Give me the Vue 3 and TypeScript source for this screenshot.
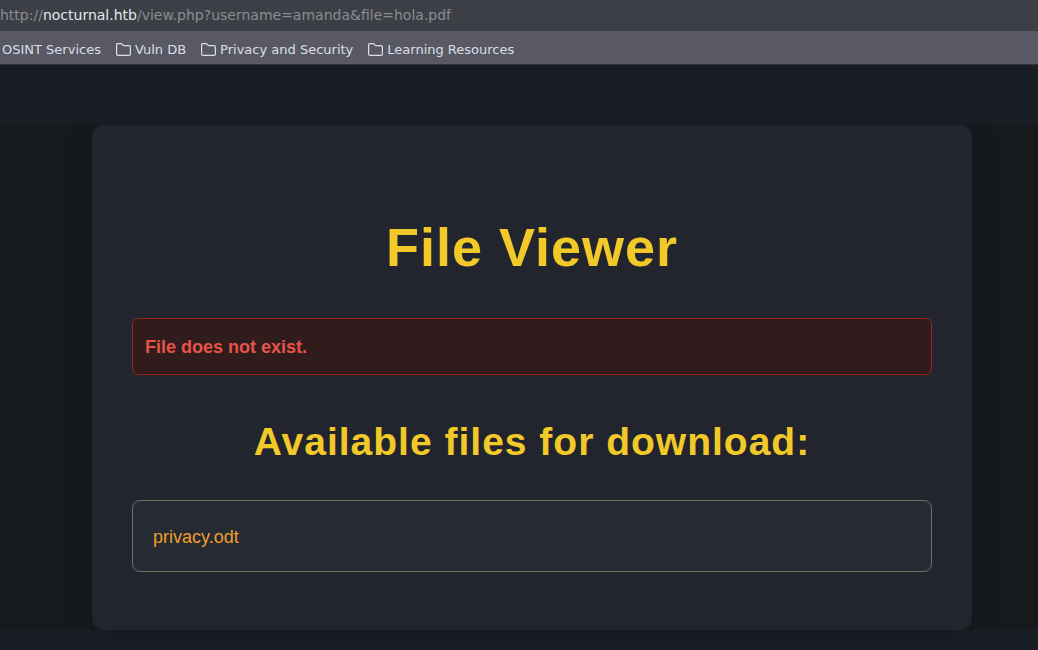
<script setup lang="ts">
interface Bookmark {
  label: string
  folder: boolean
}

const bookmarks: Bookmark[] = [
  { label: 'OSINT Services', folder: false },
  { label: 'Vuln DB', folder: true },
  { label: 'Privacy and Security', folder: true },
  { label: 'Learning Resources', folder: true },
]

const files: string[] = ['privacy.odt']
</script>

<template>
  <div class="browser">
    <div class="address">
      <span>http://</span><span class="host">nocturnal.htb</span><span>/view.php?username=amanda&amp;file=hola.pdf</span>
    </div>
    <nav class="bookmarks" aria-label="Bookmarks">
      <button v-for="b in bookmarks" :key="b.label" type="button" class="bookmark">
        <svg v-if="b.folder" class="folder" width="15" height="13" viewBox="0 0 15 13" aria-hidden="true">
          <path
            d="M1.6 0.6H4.8c.4 0 .7.1 1 .4L7 2.2c.3.3.6.4 1 .4h5a1.4 1.4 0 0 1 1.4 1.4v7A1.4 1.4 0 0 1 13 12.4H2A1.4 1.4 0 0 1 .6 11V1.6a1 1 0 0 1 1-1z"
            fill="none"
            stroke="currentColor"
            stroke-width="1.2"
            stroke-linejoin="round"
          />
        </svg>
        <span>{{ b.label }}</span>
      </button>
    </nav>
    <div class="page">
      <main class="band">
        <section class="card">
          <h1>File Viewer</h1>
          <p class="error" role="alert">File does not exist.</p>
          <h2>Available files for download:</h2>
          <ul class="files">
            <li v-for="f in files" :key="f">
              <a href="#">{{ f }}</a>
            </li>
          </ul>
        </section>
      </main>
    </div>
  </div>
</template>

<style>
body {
  margin: 0;
  background: #191d25;
}
</style>

<style scoped>
.browser {
  display: flex;
  flex-direction: column;
  min-height: 100vh;
  overflow: hidden;
}

.address {
  box-sizing: border-box;
  height: 31px;
  background: #3d3f47;
  color: #8b8c92;
  font: 14px/30px "DejaVu Sans", sans-serif;
  white-space: nowrap;
}

.host {
  color: #e6e8ec;
}

.bookmarks {
  display: flex;
  align-items: center;
  gap: 15px;
  box-sizing: border-box;
  height: 34px;
  padding: 4px 0 0 2px;
  background: #585965;
  border-bottom: 1px solid #30323c;
  color: #dcdfe5;
}

.bookmark {
  display: flex;
  align-items: center;
  gap: 4px;
  padding: 0;
  border: 0;
  background: none;
  color: inherit;
  font: 13px/19px "DejaVu Sans", sans-serif;
  white-space: nowrap;
}

.folder {
  flex: none;
}

.page {
  flex: 1;
  padding: 60px 0 20px;
  background: #191d25;
  font-family: "Liberation Sans", Arial, sans-serif;
  font-size: 18px;
}

.band {
  padding: 0 66px 0 92px;
  background: #171a1d;
}

.card {
  box-sizing: border-box;
  max-width: 880px;
  margin: 0 auto;
  padding: 92px 40px 58px;
  border-radius: 12px;
  background: #22252d;
  box-shadow: 0 4px 30px rgba(0, 0, 0, 0.15);
}

h1,
h2 {
  margin: 0;
  color: #f1c928;
  font-weight: 700;
  letter-spacing: 1px;
  text-align: center;
}

h1 {
  font-size: 54px;
  line-height: 60px;
}

h2 {
  font-size: 39px;
  line-height: 48px;
}

.error {
  margin: 41px 0 43px;
  padding: 15px 12px 13px;
  border: 1px solid #96241b;
  border-radius: 6px;
  background: #301c1d;
  color: #e65347;
  font-weight: 700;
  line-height: 27px;
}

.files {
  margin: 34px 0 0;
  padding: 0;
  list-style: none;
}

.files li {
  padding: 21px 20px 19px;
  border: 1px solid #756d62;
  border-radius: 8px;
  background: #262a32;
  line-height: 30px;
}

.files a {
  color: #ef9f2b;
  text-decoration: none;
}
</style>
